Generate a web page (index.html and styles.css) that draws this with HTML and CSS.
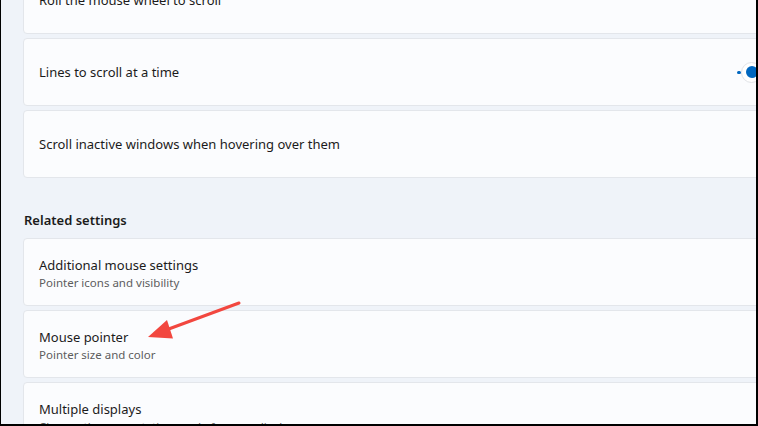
FILE: index.html
```html
<!DOCTYPE html>
<html lang="en">
<head>
<meta charset="utf-8">
<title>Mouse settings</title>
<link rel="stylesheet" href="styles.css">
</head>
<body>
<div class="frame">
  <div class="list">
    <div class="card card-first">
      <div class="text"><div class="title">Roll the mouse wheel to scroll</div></div>
    </div>
    <div class="card">
      <div class="text"><div class="title">Lines to scroll at a time</div></div>
      <div class="slider">
        <span class="track"></span>
        <span class="thumb"><span class="thumb-dot"></span></span>
      </div>
    </div>
    <div class="card">
      <div class="text"><div class="title">Scroll inactive windows when hovering over them</div></div>
    </div>

    <h2 class="section">Related settings</h2>

    <div class="card">
      <div class="text two-line">
        <div class="title">Additional mouse settings</div>
        <div class="sub">Pointer icons and visibility</div>
      </div>
    </div>
    <div class="card">
      <div class="text two-line">
        <div class="title">Mouse pointer</div>
        <div class="sub">Pointer size and color</div>
      </div>
    </div>
    <div class="card">
      <div class="text two-line">
        <div class="title">Multiple displays</div>
        <div class="sub">Change the presentation mode for your displays</div>
      </div>
    </div>
  </div>

  <svg class="arrow" width="758" height="426" viewBox="0 0 758 426">
    <line x1="239" y1="303" x2="166" y2="330" stroke="#f2473f" stroke-width="3" stroke-linecap="round"/>
    <polygon points="148,337 167,320 173,338.5" fill="#f2473f"/>
  </svg>
</div>
</body>
</html>
```
FILE: styles.css
```css
html, body {
  margin: 0;
  padding: 0;
  overflow: hidden;
}
body {
  width: 758px;
  height: 426px;
  font-family: "Segoe UI", "Noto Sans", "Open Sans", sans-serif;
  color: #1b1b1b;
}
.frame {
  position: relative;
  width: 758px;
  height: 426px;
  box-sizing: border-box;
  border-left: 1px solid #000;
  border-right: 2px solid #000;
  border-bottom: 2px solid #000;
  background: #eff3f9;
  overflow: hidden;
}
.list {
  display: flex;
  flex-direction: column;
  gap: 4px;
  padding-left: 22px;
  margin-right: -12px;
  margin-top: -34px;
}
.card {
  box-sizing: border-box;
  height: 68px;
  background: #fbfcfe;
  border: 1px solid #e3e6eb;
  border-radius: 4px;
  display: flex;
  align-items: center;
  justify-content: space-between;
  padding: 0 5px 0 15px;
}
.two-line {
  padding-top: 3px;
}
.title {
  font-size: 13px;
  line-height: 18px;
  color: #1b1b1b;
}
.sub {
  font-size: 11.5px;
  line-height: 17px;
  color: #5d5d5d;
}
.section {
  margin: 28px 0 4px 1px;
  font-size: 13px;
  font-weight: 600;
  line-height: 20px;
  color: #1b1b1b;
}
.slider {
  display: flex;
  align-items: center;
  gap: 0;
}
.track {
  width: 4px;
  height: 3px;
  border-radius: 2px;
  background: #0067c0;
}
.thumb {
  box-sizing: border-box;
  width: 21px;
  height: 21px;
  border-radius: 50%;
  background: #fff;
  border: 1px solid #e1e3e7;
  display: flex;
  align-items: center;
  justify-content: center;
}
.thumb-dot {
  width: 12px;
  height: 12px;
  border-radius: 50%;
  background: #0067c0;
}
.arrow {
  position: absolute;
  left: -1px;
  top: 0;
  pointer-events: none;
}
```
